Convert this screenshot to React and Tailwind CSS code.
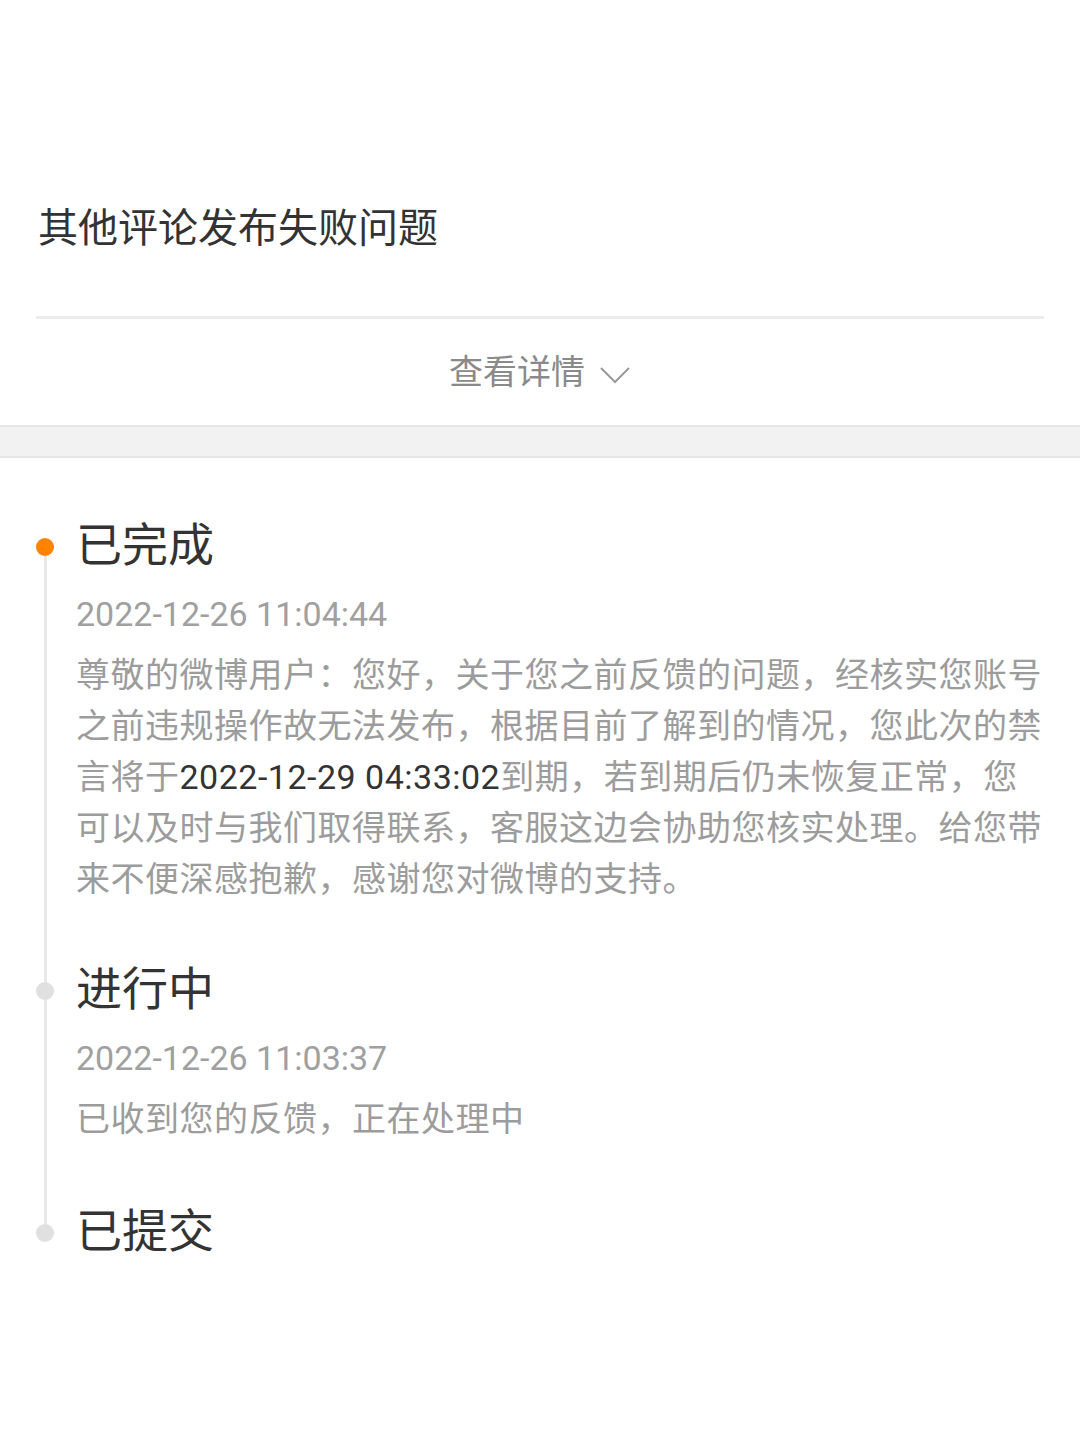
const font = { fontFamily: '"Roboto", "Noto Sans CJK SC", sans-serif' };

const steps = [
  {
    title: "已完成",
    active: true,
    time: "2022-12-26 11:04:44",
    body: (
      <>
        尊敬的微博用户：您好，关于您之前反馈的问题，经核实您账号之前违规操作故无法发布，根据目前了解到的情况，您此次的禁言将于
        <span className="text-[#333333]">2022-12-29 04:33:02</span>
        到期，若到期后仍未恢复正常，您可以及时与我们取得联系，客服这边会协助您核实处理。给您带来不便深感抱歉，感谢您对微博的支持。
      </>
    ),
    gap: "pb-[54px]",
  },
  {
    title: "进行中",
    time: "2022-12-26 11:03:37",
    body: "已收到您的反馈，正在处理中",
    gap: "pb-[56px]",
  },
  { title: "已提交" },
];

function Step({ step, first, last }) {
  return (
    <div className="flex">
      <div className="ml-[31px] flex w-[28px] flex-col items-center">
        <div className={`h-[32px] w-[3px] ${first ? "" : "bg-[#e8e8e8]"}`} />
        <div
          className={`relative z-10 -my-[9px] h-[18px] w-[18px] rounded-full ${
            step.active ? "bg-[#ff8200]" : "bg-[#e0e0e0]"
          }`}
        />
        <div className={`w-[3px] flex-1 ${last ? "" : "bg-[#e8e8e8]"}`} />
      </div>
      <div className={`ml-[17px] w-[968px] ${step.gap || ""}`}>
        <h3 className="text-[46px] leading-[60px] text-[#333333]">{step.title}</h3>
        {step.time && (
          <p className="mt-[17px] text-[34px] leading-[44px] text-[#a0a0a0]">{step.time}</p>
        )}
        {step.body && (
          <p className="mt-[14px] text-[34px] leading-[51px] tracking-[0.5px] text-[#9c9c9c]">
            {step.body}
          </p>
        )}
      </div>
    </div>
  );
}

export default function App() {
  return (
    <div className="min-h-[1439px] w-[1080px] bg-white" style={font}>
      {/* Header */}
      <div className="pt-[201px]">
        <h2 className="pl-[38px] text-[40px] leading-[56px] text-[#333333]">其他评论发布失败问题</h2>
        <div className="mx-[36px] mt-[59px] h-[3px] bg-[#ececec]" />
        <div className="flex h-[106px] items-center justify-center gap-[14px] text-[34px] text-[#8a8a8a]">
          <span>查看详情</span>
          <svg width="32" height="18" viewBox="0 0 32 18" fill="none" className="mt-[6px]">
            <path d="M2 2 L16 16 L30 2" stroke="#9a9a9a" strokeWidth="2" />
          </svg>
        </div>
      </div>

      {/* Divider band */}
      <div className="h-[33px] border-y-2 border-[#e6e6e6] bg-[#f2f2f2]" />

      {/* Timeline */}
      <div className="pt-[57px]">
        {steps.map((s, i) => (
          <Step key={s.title} step={s} first={i === 0} last={i === steps.length - 1} />
        ))}
      </div>
    </div>
  );
}
